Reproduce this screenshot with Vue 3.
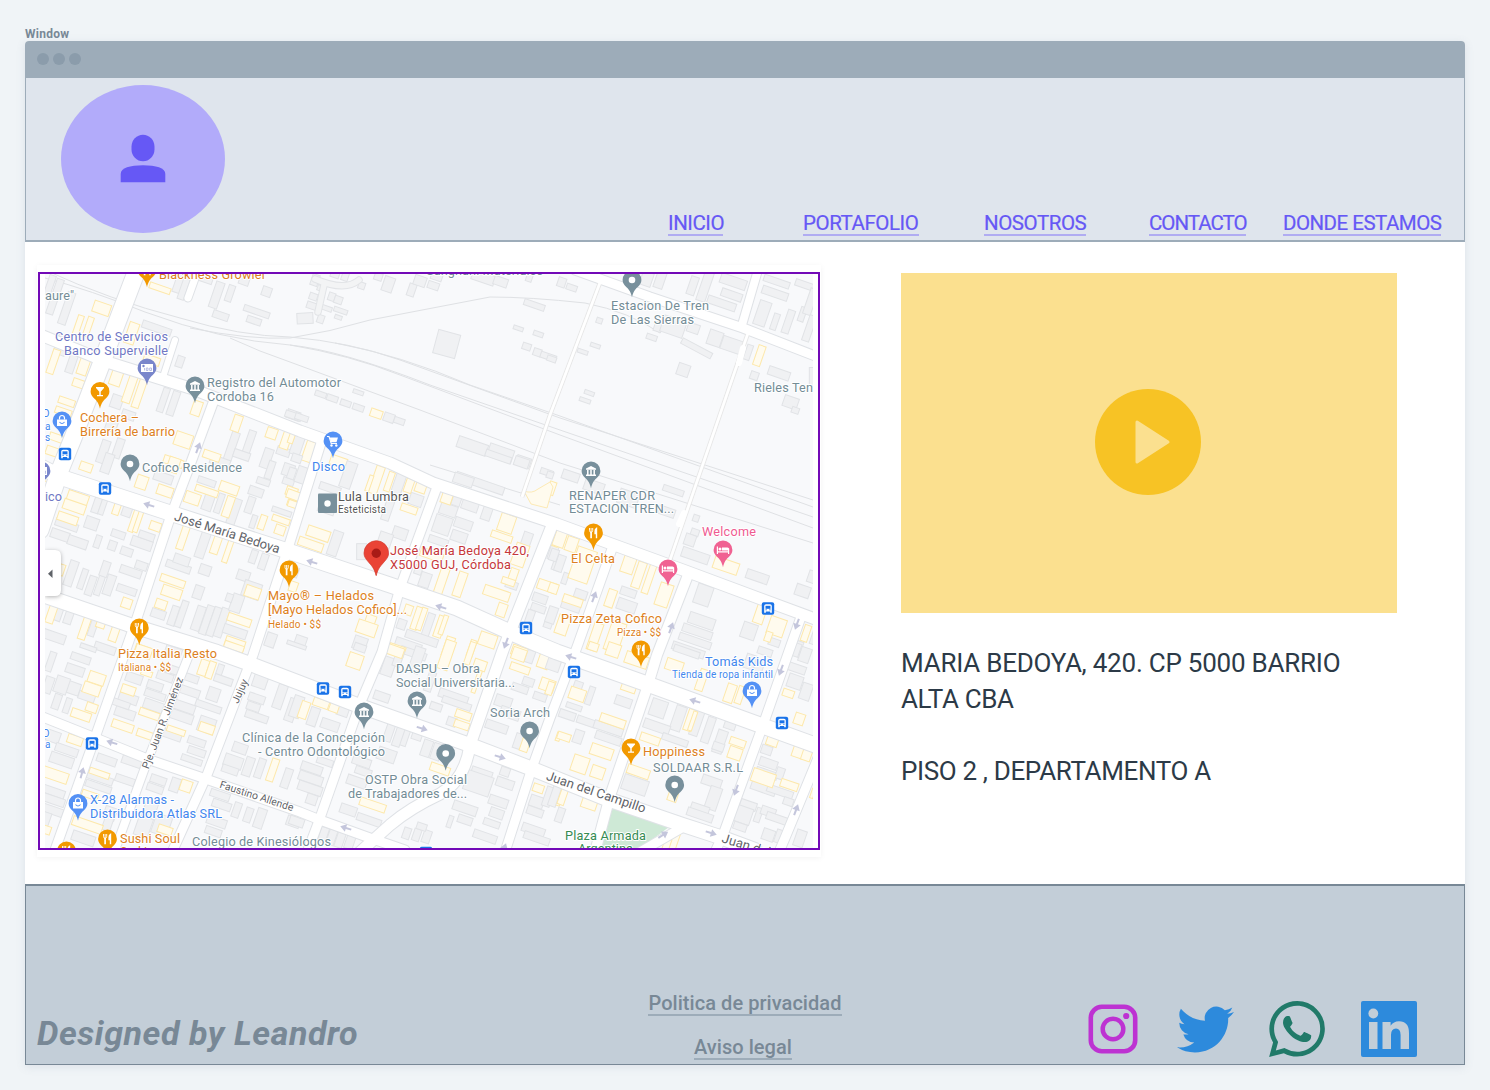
<script setup>
const nav = [
  { t: 'INICIO', w: 55, gap: 0, s: -.45 },
  { t: 'PORTAFOLIO', w: 116, gap: 80, s: -.45 },
  { t: 'NOSOTROS', w: 102, gap: 65, s: -.45 },
  { t: 'CONTACTO', w: 97, gap: 63, s: -1 },
  { t: 'DONDE ESTAMOS', w: 158, gap: 37, s: -.52 },
]

// Streets: width + path
const streets = [
  [9, 'M575 270L650 297L743 328L815 356'],
  [11, 'M43 336L107 362L190 388L300 431L390 463L433 483L557 524L617 546L683 570L815 619'],
  [15, 'M43 468L63 478L170 513L300 555L390 585L457 608L523 638L557 652L650 685L760 725L815 745'],
  [14, 'M43 595L57 600L130 625L217 652L253 665L300 683L357 705L470 745L530 768L607 799L683 825L720 837L755 850'],
  [9, 'M43 717L93 737L150 760L203 778L300 812L320 820L370 838L405 850'],
  [17, 'M137 270L102 362L73 438L60 470L40 530'],
  [7, 'M198 270L188 298'],
  [6, 'M175 340L163 377'],
  [9, 'M213 403L190 465L170 518L137 618L97 732L55 850'],
  [9, 'M321 443L290 542L253 655L207 775L173 850'],
  [8, 'M189 655L147 762L115 850'],
  [9, 'M437 487L400 588L382 652L360 704L320 818L308 850'],
  [11, 'M553 523L510 632L503 650L470 745Q465 780 440 794Q410 808 390 825L360 852'],
  [9, 'M613 546L577 647L550 718L532 768L505 852'],
  [10, 'M688 575L657 655L647 688L610 796L595 852'],
  [9, 'M801 617L790 648L763 725L723 835L715 852'],
  [8, 'M758 270L742 325'],
  [9, 'M818 758L785 838L779 852'],
  [9, 'M685 826L640 852'],
]
const paths = ['M601 280L550 415L522 497', 'M748 333L670 560']
const rails = [
  'M45 278Q90 290 145 312Q220 340 290 345Q340 350 430 385L560 430L813 517',
  'M45 270Q110 300 180 318Q240 336 290 337Q350 342 400 360L560 418L813 500',
  'M190 328Q250 340 290 338Q330 332 370 320L490 297Q530 297 585 303Q630 312 660 333',
  'M290 345Q350 355 400 375L560 435L813 528', 'M230 338Q260 352 290 362L420 410L560 463L813 543',
  'M335 343Q400 355 470 385L560 416L813 507', 'M430 465L560 505',
]

// Buildings per tile, in thirds of a pixel: centre x, centre y, width, depth
const tiles = [
  { x: 30, y: 265,
    g: [[75,95,22,110],[110,130,24,100],[60,60,20,60],[380,190,90,22],[450,50,28,70],[465,60,20,90],[520,35,60,30],[560,90,26,80],[600,85,20,50],[645,40,30,40],[710,80,28,28],[572,152,48,22],[680,140,80,18],[672,167,44,20],[95,240,35,60],[125,295,24,60],[450,290,22,34],[400,405,20,75],[430,415,22,75],[260,410,34,40],[295,450,40,26],[245,480,34,40],[220,560,26,70],[265,550,24,60],[605,545,24,90],[655,540,22,90],[635,570,50,24],[790,450,40,26],[570,590,60,26],[710,580,28,60],[760,560,40,24]],
    y2: [[215,130,52,34],[145,180,18,60],[175,185,18,60],[305,205,30,65],[390,70,65,18],[70,290,22,75],[160,305,30,50],[145,355,34,24],[258,340,34,44],[300,370,25,90],[328,385,22,90],[365,285,50,24],[110,410,50,20],[100,440,50,20],[85,520,55,22],[70,560,45,26],[500,430,28,44],[460,525,52,42],[620,475,26,50],[725,505,32,32],[768,525,26,55],[545,572,52,24],[430,590,60,24]] },
  { x: 290, y: 265,
    g: [[75,45,22,34],[70,95,24,20],[65,122,30,20],[92,70,20,16],[125,95,20,24],[110,130,32,14],[145,105,24,22],[152,137,42,14],[92,162,20,24],[145,157,22,12],[135,28,26,20],[165,35,20,24],[215,62,20,20],[265,35,24,22],[295,58,32,45],[365,75,22,38],[390,48,36,30],[430,62,34,22],[440,35,34,22],[580,38,70,30],[632,50,42,26],[718,38,18,24],[733,120,64,18],[685,190,30,12],[745,207,30,14],[710,245,26,20],[742,262,24,22],[775,275,48,18],[470,237,68,72,15],[92,388,34,16],[127,400,34,18],[167,415,32,18],[205,428,34,18],[205,382,32,12],[45,160,48,32,-3],[10,452,50,20],[35,458,40,18],[297,458,32,26],[328,468,32,18],[547,543,92,34],[632,565,76,40],[700,590,44,30],[22,540,32,60]],
    y2: [[259,446,36,24],[58,560,32,62],[145,590,50,30],[4,520,16,30]] },
  { x: 550, y: 265,
    g: [[35,52,24,28],[65,68,32,18],[290,42,34,42],[330,45,28,50],[428,62,24,56],[465,65,28,90],[550,50,80,30],[545,90,64,24],[515,115,88,24],[680,50,80,20],[675,85,80,24],[637,145,36,75],[675,170,18,50],[715,170,22,72],[757,148,18,44],[765,60,60,20],[782,110,24,80],[778,190,22,80],[148,167,18,16],[305,217,32,16],[136,242,30,12],[98,260,32,12],[5,282,28,16],[440,250,100,18,28],[325,185,24,30],[370,185,70,50],[430,190,36,28],[495,220,42,45],[545,240,62,40],[400,315,36,36],[595,262,18,46],[613,332,24,24],[687,325,66,26],[118,384,30,12],[105,406,34,12],[722,412,44,34],[736,436,22,18],[787,335,18,55,0]],
    y2: [[628,272,22,62]] },
  { x: 30, y: 455,
    g: [[232,25,28,60],[202,145,22,60],[292,165,28,40],[220,150,16,60],[185,205,40,36],[110,210,70,22],[90,240,56,28],[143,262,60,28],[203,260,18,38],[265,238,42,22],[247,272,24,28],[290,290,36,24],[335,265,64,30],[350,243,48,22],[123,355,26,78],[158,372,18,62],[182,392,22,60],[208,392,18,60],[225,342,24,46],[238,390,26,62],[302,350,66,24],[334,332,36,24],[290,405,60,22],[445,335,76,22],[455,315,48,28],[518,270,28,80],[525,345,34,30],[505,412,28,40],[430,482,22,60],[455,477,20,82],[385,477,44,26],[505,490,26,75],[530,495,22,90],[552,500,22,90],[575,503,24,90],[640,362,38,30],[665,405,54,48],[620,445,34,54],[598,428,20,24],[615,530,72,28],[670,305,20,40],[700,320,22,48],[535,140,30,54],[568,145,18,60],[612,170,26,80],[660,150,22,50],[678,110,44,26],[700,80,40,20],[755,170,60,16],[775,80,34,20],[775,45,34,36],[720,45,20,55],[670,200,16,40],[400,68,58,28],[530,80,55,20],[85,470,26,55],[118,480,24,55],[72,545,70,28],[190,515,20,60],[225,580,65,24],[722,555,30,42],[430,590,50,28]],
    y2: [[168,36,38,26],[55,70,28,22],[143,130,64,34],[133,155,68,30],[113,190,62,26],[262,155,20,50],[312,195,16,74],[325,198,14,70],[376,214,34,26],[335,82,34,40],[405,108,48,30],[487,130,46,34],[530,108,70,20],[597,100,58,30],[595,155,24,64],[460,245,22,80],[558,270,24,55],[593,290,16,68],[697,202,20,44],[785,110,34,26],[753,195,54,18],[750,225,30,28],[786,145,28,18],[428,378,76,22],[425,412,60,32],[393,448,34,28],[290,445,30,30],[668,412,46,34],[628,495,72,24],[615,565,60,28],[65,475,24,60],[165,515,22,80],[213,505,26,28],[253,535,24,50],[95,345,16,34],[430,30,34,45],[340,585,50,24],[790,395,24,30]] },
  { x: 290, y: 455,
    g: [[175,60,34,80],[35,60,32,50],[5,55,22,34],[120,100,65,22],[20,10,30,24],[325,90,30,70],[295,160,24,75],[378,135,40,34],[110,160,50,30],[330,235,44,34],[285,255,40,44],[135,265,30,76],[215,290,30,48,0],[475,165,52,34],[457,210,52,54],[445,258,60,22],[520,207,54,30],[507,245,48,32],[500,135,26,34],[540,152,50,30],[590,175,28,42],[570,85,150,24],[520,75,60,30],[695,22,44,28],[770,52,38,18],[625,5,80,20],[405,375,32,44],[385,345,22,26],[710,255,28,46],[665,390,36,22],[750,430,44,26],[745,460,44,22],[720,485,22,40],[780,490,24,60],[790,290,24,50],[800,330,24,34],[32,558,34,30],[210,565,40,40],[335,508,26,30],[415,510,22,72],[395,550,100,24],[355,570,80,26],[370,595,80,22],[10,350,30,30]],
    y2: [[260,75,26,85],[238,85,12,50],[298,80,18,60],[357,92,24,42],[392,98,32,30],[357,162,50,22],[85,236,70,32],[62,268,76,26],[10,120,40,26],[10,148,32,20],[470,130,32,32],[650,205,46,54],[635,245,65,20],[690,300,40,68],[670,360,24,40],[655,380,40,20],[425,300,70,26],[455,378,26,80],[510,388,26,76],[620,415,80,30],[635,465,28,40],[770,393,55,30],[800,250,20,50],[380,490,20,70],[395,492,16,70],[355,465,24,30],[450,515,24,66],[460,510,14,60],[240,500,30,40],[230,520,60,40],[593,555,52,40],[475,575,26,60],[545,580,18,50],[320,585,50,30],[690,590,50,30]] },
  { x: 550, y: 455,
    g: [[62,63,52,28],[132,95,60,34],[370,107,64,18],[235,130,60,44],[350,170,50,26],[438,190,18,20],[435,232,24,20],[420,255,32,34],[436,302,84,30],[622,365,68,28],[758,408,44,34],[785,365,22,36],[460,420,48,60],[235,412,48,24],[230,452,58,34],[92,418,38,26],[62,455,58,22],[30,325,24,50],[12,300,24,36],[45,370,16,34],[5,480,28,50],[455,498,80,34],[442,530,92,24],[435,558,100,22],[415,585,100,24],[597,528,44,48],[673,562,34,22],[645,590,44,22],[800,530,20,80],[745,575,24,34],[0,60,20,20]],
    y2: [[30,250,34,52],[65,268,34,44],[98,330,60,100],[235,330,38,50],[267,360,26,80],[297,372,20,90],[342,420,40,70],[182,430,26,54],[68,437,60,24],[10,400,28,30],[38,510,36,58],[135,545,28,84],[195,545,45,90],[528,332,76,36],[680,515,50,54],[630,478,30,56],[655,545,20,30],[768,535,20,50],[5,100,20,40],[260,590,30,30]] },
  { x: 30, y: 645,
    g: [[152,40,60,22],[135,75,56,28],[62,50,20,60],[130,130,40,36],[95,120,40,50],[55,120,26,50],[170,155,50,24],[80,170,22,46],[112,182,18,46],[175,8,50,14],[312,100,50,28],[295,160,58,28],[285,205,62,28],[270,175,60,20],[430,75,50,24],[405,95,50,24],[375,122,48,24],[375,150,64,22],[370,182,60,30],[485,100,42,22],[480,140,60,24],[550,148,36,40],[535,185,80,20],[570,75,18,34],[580,105,56,22],[460,185,72,28],[455,215,70,28],[425,270,60,24],[530,240,50,46],[500,290,54,22],[500,320,54,22],[485,345,64,18],[690,110,42,38],[750,155,28,74],[785,195,28,70],[680,160,50,24],[670,185,40,24],[680,215,70,22],[70,275,40,34],[110,315,70,24],[95,345,72,32],[230,345,60,24],[305,350,60,24],[210,400,80,22],[205,425,80,20],[285,405,60,22],[385,405,48,24],[375,430,50,22],[435,420,28,42],[70,440,70,24],[70,465,70,24],[65,495,70,24],[360,495,38,50],[340,545,44,60],[395,540,50,60],[240,505,36,38],[570,450,60,22],[575,480,58,24],[620,495,22,46],[655,510,22,44],[690,520,28,60],[560,530,60,26],[550,560,50,22],[610,350,56,36],[600,375,50,22],[655,365,26,58],[690,370,22,60],[770,400,24,60],[160,580,70,30],[235,530,26,55],[40,530,34,60],[630,310,44,30],[790,530,40,30]],
    y2: [[200,100,50,34],[185,132,52,34],[185,188,34,26],[153,210,60,26],[295,135,42,26],[520,68,26,48],[542,75,20,52],[358,207,62,22],[278,243,66,24],[345,268,50,22],[438,257,56,18],[530,250,46,28],[612,5,60,20],[340,20,50,34],[135,285,46,26],[75,390,80,32],[208,385,62,18],[468,423,34,34],[728,375,22,70],[172,540,92,28],[50,555,24,24],[180,450,50,20],[405,555,44,24],[805,200,12,40],[350,85,34,16]] },
  { x: 290, y: 645,
    g: [[20,185,30,66],[70,215,28,56],[158,200,34,26],[295,65,36,56],[325,40,24,50],[275,155,48,26],[120,240,55,30],[345,270,24,66],[298,260,24,60],[325,275,24,60],[380,275,30,20],[438,185,36,22],[420,110,22,60],[490,155,90,26],[500,175,90,20],[485,230,28,26],[410,310,28,50],[440,320,28,50],[380,45,32,80],[65,370,65,26],[62,400,74,28],[60,430,74,28],[65,463,32,30],[105,350,50,20],[215,350,56,26],[290,330,55,38],[220,380,50,22],[200,410,60,28],[175,495,50,28],[237,525,75,22],[350,565,22,34],[380,570,22,36],[410,575,24,38],[395,545,30,20],[575,385,64,26],[565,415,80,60],[525,490,74,28],[525,525,44,24],[480,530,14,36],[645,380,28,26],[645,415,54,28],[625,470,58,28],[620,505,42,28],[605,535,50,20],[585,575,72,24],[690,290,34,46],[620,245,68,26],[640,170,50,34],[660,205,60,30],[715,110,34,24],[690,130,50,22],[720,35,24,38],[750,155,40,22],[740,470,42,34],[735,500,50,24],[775,455,24,60],[730,555,70,26],[740,580,80,22],[100,570,24,46],[125,577,24,46],[150,585,24,46],[180,590,26,44],[20,530,44,26],[795,55,30,34],[210,8,36,22],[20,0,60,12]],
    y2: [[195,48,44,44],[315,18,52,30],[42,195,26,52],[93,175,48,24],[132,188,28,26],[470,30,32,90],[540,25,18,70],[570,60,38,30],[450,372,60,24],[248,480,80,24],[520,210,48,24],[515,240,46,22],[687,28,42,36],[690,70,60,22],[762,47,34,46],[772,120,44,36],[705,300,24,40],[745,430,32,24],[560,110,12,70],[805,275,12,26],[805,470,14,24]] },
  { x: 550, y: 645,
    g: [[10,60,40,34],[120,152,18,56],[85,120,26,22],[220,170,50,28],[72,185,48,16],[52,210,50,24],[110,230,60,22],[175,250,90,24],[175,280,80,24],[85,275,28,40],[325,190,48,52],[385,220,32,76],[440,235,26,76],[475,255,24,80],[320,245,80,28],[375,285,80,20],[255,420,76,46],[410,20,80,20],[510,290,30,70],[540,240,34,26],[505,305,34,24],[485,410,60,28],[490,460,36,70],[450,490,56,22],[450,510,80,24],[650,315,32,26],[655,355,55,26],[650,385,66,22],[640,430,76,26],[690,440,80,22],[595,480,50,24],[580,510,50,50],[570,545,40,22],[625,510,18,44],[655,500,44,26],[680,520,64,22],[715,470,30,22],[655,570,36,34],[750,580,30,50],[690,575,28,40],[740,70,56,24],[735,110,44,40],[765,30,32,44],[768,140,32,50],[740,15,20,40],[690,385,24,34],[15,450,24,70],[30,510,22,44],[625,70,26,44],[600,50,30,44]],
    y2: [[82,148,48,36],[235,130,44,20],[188,228,78,26],[155,320,68,34],[300,282,60,24],[265,380,68,28],[42,275,40,22],[90,358,48,50],[143,382,40,36],[40,450,20,60],[118,475,46,34],[373,62,52,34],[455,105,24,66],[540,145,28,56],[420,225,24,66],[428,228,12,60],[563,292,48,22],[555,325,40,36],[667,288,34,30],[745,320,34,36],[770,330,28,34],[640,398,70,40],[718,420,54,24],[368,455,28,28],[368,590,30,60],[350,600,20,40],[715,145,34,22],[748,222,30,34],[190,15,40,40],[260,45,70,36],[130,5,30,24],[570,150,20,54],[788,445,10,30],[0,130,20,40]] },
]

const C = { o: '#dd7f22', g: '#738c96', p: '#7077c4', b: '#4387ee', k: '#ef5a91', r: '#c5373b', n: '#358b52', d: '#555' }
// text, left, right, baseline, colour, size
const labels = [
  ['Blackness Growler', 159, 266, 279, 'o'], ['Sanghani Materiales', 426, 543, 275, 'g'], ['aure"', 45, 74, 299.5, 'g'],
  ['Centro de Servicios', 55, 168, 341, 'p'], ['Banco Supervielle', 64, 168, 355, 'p'],
  ['Registro del Automotor', 207, 341, 387, 'g'], ['Cordoba 16', 207, 274, 401, 'g'],
  ['Cochera –', 80, 139, 421.5, 'o'], ['Birrería de barrio', 80, 175, 435.5, 'o'],
  ['Estacion De Tren', 611, 709, 310, 'g'], ['De Las Sierras', 611, 694, 324, 'g'], ['Rieles Ten', 754, 813, 392, 'g'],
  ['Disco', 312, 345, 471, 'b'], ['Cofico Residence', 142, 242, 472, 'g'],
  ['Lula Lumbra', 338, 409, 501, 'd'], ['Esteticista', 338, 386, 513, 'd', 10],
  ['José María Bedoya 420,', 390, 529, 555, 'r'], ['X5000 GUJ, Córdoba', 390, 511, 569, 'r'],
  ['RENAPER CDR', 569, 655, 500, 'g'], ['ESTACION TREN...', 569, 674, 513, 'g'],
  ['Welcome', 702, 756, 536, 'k'], ['El Celta', 571, 615, 563, 'o'],
  ['Mayo® – Helados', 268, 374, 600, 'o'], ['[Mayo Helados Cofico]...', 268, 407, 614, 'o'], ['Helado • $$', 268, 321, 627.5, 'o', 10],
  ['Pizza Zeta Cofico', 561, 662, 623, 'o'], ['Pizza • $$', 617, 661, 636, 'o', 10],
  ['Tomás Kids', 705, 773, 665.5, 'b'], ['Tienda de ropa infantil', 672, 773, 678, 'b', 10],
  ['Pizza Italia Resto', 118, 217, 658, 'o'], ['Italiana • $$', 118, 171, 671, 'o', 10],
  ['DASPU – Obra', 396, 480, 673, 'g'], ['Social Universitaria...', 396, 515, 687, 'g'], ['Soria Arch', 490, 550, 717, 'g'],
  ['Clínica de la Concepción', 242, 385, 742, 'g'], ['- Centro Odontológico', 258, 385, 756, 'g'],
  ['OSTP Obra Social', 365, 467, 784, 'g'], ['de Trabajadores de...', 348, 467, 798, 'g'],
  ['Hoppiness', 643, 705, 756, 'o'], ['SOLDAAR S.R.L', 653, 743, 772, 'g'],
  ['X-28 Alarmas -', 90, 174, 804, 'b'], ['Distribuidora Atlas SRL', 90, 222, 818, 'b'],
  ['Sushi Soul', 120, 180, 842.5, 'o'], ['Sushi', 120, 147, 856, 'o'], ['Colegio de Kinesiólogos', 192, 331, 846, 'g'],
  ['Plaza Armada', 565, 646, 839.5, 'n'], ['Argentina', 578, 633, 853, 'n'],
  ['O', 42, 50, 417, 'b', 11], ['a', 45, 50, 429.5, 'b', 10], ['s', 45, 50, 440.5, 'b', 10], ['ico', 45, 62, 501, 'p'],
  ['O', 42, 50, 736.5, 'b', 11], ['a', 45, 50, 748, 'b', 10],
]
// text, start x, baseline y, angle, length, size
const roads = [
  ['José María Bedoya', 173.5, 520, 17.7, 110, 13], ['Juan del Campillo', 545.5, 779.5, 18.8, 104, 13], ['Juan del', 721, 842, 17, 50, 13],
  ['Jujuy', 238, 704, -66, 25, 10.5], ['Pje. Juan R. Jiménez', 148.5, 769.5, -69, 97, 10.5], ['Faustino Allende', 219, 787.5, 18, 77, 10.5],
]
const pinColor = { food: '#f29900', bar: '#f29900', bank: '#78909c', dot: '#78909c', bag: '#5491f5', cart: '#5491f5', bed: '#f06292', atm: '#7986cb' }
const pins = [
  ['food', 147, 270], ['atm', 147, 368], ['bank', 195, 386], ['bar', 100, 391.5], ['bag', 62, 421], ['dot', 130, 464], ['dot', 632, 280],
  ['cart', 333, 441], ['bank', 591, 471], ['food', 593.5, 533], ['bed', 723, 550], ['bed', 668, 569], ['food', 641, 650], ['bag', 752, 691],
  ['food', 289, 570], ['food', 139.3, 628], ['bank', 364, 712], ['bank', 417, 701], ['dot', 445.7, 753.5], ['dot', 529.6, 731], ['bar', 631, 748],
  ['dot', 674.7, 785], ['bag', 78, 803.5], ['food', 107.5, 839], ['food', 66.5, 851], ['atm', 41, 471],
]
const buses = [[65, 454], [105, 488.5], [526, 628], [768, 608.5], [574, 672], [782, 723], [323, 688.5], [345, 692], [92, 743.5], [426, 853]]
const arrows = [
  [149, 505, 197], [198, 448, -70], [312, 562, 197], [441, 607, 197], [506, 643, 110], [594, 597, -70], [671, 628, -70], [797, 624, 110],
  [571, 657, 197], [695, 701, 197], [781, 670, 110], [736, 790, 110], [796, 810, -70], [663, 835, -32], [711, 833, 17], [422, 728.5, 17],
  [500, 757, 17], [346, 828, 197], [112, 742.5, 197], [82, 773, -75], [504, 849, -70],
]
</script>

<template>
  <div class="page">
    <div class="caption">Window</div>
    <div class="window">
      <div class="bar"><i></i><i></i><i></i></div>
      <header>
        <div class="avatar">
          <svg viewBox="0 0 46 50" width="46" height="50">
            <rect x="11.500" y=".8" width="23" height="26.500" rx="11.500" ry="12" />
            <path d="M.7 48.300V40C.7 34 10 31.300 23 31.300S45.300 34 45.300 40V48.300Z" />
          </svg>
        </div>
        <nav>
          <a v-for="n in nav" :key="n.t" :style="{ width: n.w + 'px', marginLeft: n.gap + 'px', letterSpacing: n.s + 'px' }">{{ n.t }}</a>
        </nav>
      </header>

      <main>
        <div class="card">
          <div class="frame">
            <svg class="map" viewBox="45 274 768 574" width="768" height="574">
              <rect x="45" y="274" width="768" height="574" fill="#f8f9fb" />
              <g fill="none" stroke="#dfe1e4" stroke-width="1">
                <path v-for="r in rails" :key="r" :d="r" />
              </g>
              <g v-for="(t, i) in tiles" :key="i" :transform="`translate(${t.x} ${t.y}) scale(.33333)`" stroke-width="3">
                <rect v-for="(b, j) in t.g" :key="'g' + j" :x="-b[2] / 2" :y="-b[3] / 2" :width="b[2]" :height="b[3]" fill="#f0f1f3" stroke="#e1e3e6" :transform="`translate(${b[0]} ${b[1]}) rotate(${b[4] ?? 19})`" />
                <rect v-for="(b, j) in t.y2" :key="'y' + j" :x="-b[2] / 2" :y="-b[3] / 2" :width="b[2]" :height="b[3]" fill="#fffbee" stroke="#fde8ab" :transform="`translate(${b[0]} ${b[1]}) rotate(19)`" />
              </g>
              <path d="M524 491Q532 494 538 489L550 482L553 487L547 508L531 504Z" fill="#fffbee" stroke="#fdeab5" />
              <path d="M610 804L669 827L638 850H596Z" fill="#cee9d6" />
              <g fill="none" stroke="#dfe2e6" stroke-linejoin="round" stroke-linecap="round">
                <path v-for="s in streets" :key="s[1]" :d="s[1]" :stroke-width="s[0] + 2" />
              </g>
              <path v-for="p in paths" :key="p" :d="p" fill="none" stroke="#e6e6e6" stroke-width="4.500" />
              <path v-for="p in paths" :key="'w' + p" :d="p" fill="none" stroke="#fff" stroke-width="2.800" />
              <path d="M743 348L739 363M684 513L679 524" stroke="#fff" stroke-width="6" stroke-linecap="round" />
              <path d="M315 279Q345 292 359 280M324 285L318 312" fill="none" stroke="#e2e4e7" stroke-width="7.500" stroke-linecap="round" />
              <path d="M315 279Q345 292 359 280M324 285L318 312" fill="none" stroke="#f3f4f5" stroke-width="5.500" stroke-linecap="round" />
              <g fill="none" stroke="#fff" stroke-linejoin="round" stroke-linecap="round">
                <path v-for="s in streets" :key="s[1]" :d="s[1]" :stroke-width="s[0]" />
              </g>
              <g fill="none" stroke="#c4c6dc" stroke-width="2">
                <path v-for="(a, i) in arrows" :key="i" d="M-5.500 0H1" :transform="`translate(${a[0]} ${a[1]}) rotate(${a[2]})`" />
              </g>
              <g fill="#c4c6dc">
                <path v-for="(a, i) in arrows" :key="i" d="M0-4L6 0L0 4Z" :transform="`translate(${a[0]} ${a[1]}) rotate(${a[2]})`" />
              </g>

              <g v-for="(b, i) in buses" :key="'b' + i" :transform="`translate(${b[0]} ${b[1]})`">
                <rect x="-6.200" y="-6.200" width="12.400" height="12.400" rx="2" fill="#1a73e8" />
                <path d="M-3.800 4.200V-2.500Q-3.800-4.200-2-4.200H2Q3.800-4.200 3.800-2.500V4.200H2.200V3H-2.200V4.200Z" fill="#fff" />
                <path d="M-2.500-2.700H2.500V.3H-2.500Z" fill="#1a73e8" />
                <path d="M-2.500 1.300H-1.300M1.300 1.300H2.500" stroke="#1a73e8" />
              </g>

              <rect x="318" y="493.500" width="19" height="19.500" rx="1" fill="#78909c" />
              <circle cx="327.500" cy="503.500" r="3.200" fill="#fff" />

              <g v-for="(p, i) in pins" :key="'p' + i" :transform="`translate(${p[1]} ${p[2]})`" fill="#fff">
                <path d="M0 17.200C-1.300 12-3 9.600-5.500 7.300C-8 5-9.400 2.800-9.400 0A9.400 9.400 0 0 1 9.400 0C9.400 2.800 8 5 5.500 7.300C3 9.600 1.300 12 0 17.200Z" :fill="pinColor[p[0]]" />
                <circle v-if="p[0] === 'dot'" r="3.300" />
                <g v-else-if="p[0] === 'food'" stroke="#fff" fill="none">
                  <path d="M-4-5V-2.500Q-4-.8-2.400-.8T-.8-2.500V-5M-2.400-5V0" stroke-width=".9" />
                  <path d="M-2.400-1V5.300" stroke-width="1.700" />
                  <path d="M3 5.300V-4.600Q1.600-3.800 1.600-1.500V.5H3" stroke-width="1.400" fill="#fff" />
                </g>
                <path v-else-if="p[0] === 'bar'" d="M-4-4.500H4V-3.500L.7.200V3.500H3V4.700H-3V3.500H-.7V.200L-4-3.500Z" />
                <g v-else-if="p[0] === 'bank'">
                  <path d="M-5-2.500L0-5L5-2.500V-1.300H-5ZM-5 3.500H5V5H-5Z" />
                  <path d="M-3.200-1.300V4M0-1.300V4M3.200-1.300V4" stroke="#fff" stroke-width="1.500" />
                </g>
                <g v-else-if="p[0] === 'bag'">
                  <path d="M-5-1.500H5V5H-5Z" />
                  <path d="M-2.500-1.500V-3A2.500 2.500 0 0 1 2.500-3V-1.500" fill="none" stroke="#fff" stroke-width="1.200" />
                  <path d="M-2.500 1Q0 4 2.500 1" fill="none" stroke="#5491f5" stroke-width="1.100" />
                </g>
                <g v-else-if="p[0] === 'cart'">
                  <path d="M-3.500-3.500H5L3.500 1.300H-2Z" />
                  <path d="M-6-4.500H-4L-1.800 2.500H4" fill="none" stroke="#fff" stroke-width="1.100" />
                  <circle cx="-1.500" cy="4.500" r="1.200" /><circle cx="3.300" cy="4.500" r="1.200" />
                </g>
                <g v-else-if="p[0] === 'bed'">
                  <path d="M-6.200-3.500H-5V1.200H5V-1.500H6.200V4H5V2.600H-5V4H-6.200ZM-1-2.500H4.500Q6.200-2.300 6.200-.5V.5H-1Z" />
                  <circle cx="-3" cy="-1" r="1.500" />
                </g>
                <g v-else>
                  <rect x="-6" y="-4" width="12" height="8" />
                  <circle cx="-3.500" cy="-2" r="1.200" fill="#7986cb" />
                  <path d="M-2.500 0V2.500M-.7 0H1V2.500H-.7ZM2.700 0H4.500V2.500H2.700Z" fill="none" stroke="#a7afdd" stroke-width=".8" />
                </g>
              </g>

              <path d="M376 575.500C374.500 568.500 371.500 565.500 368 561.500C365 558 364 556 364 553A12.300 12.300 0 0 1 388.600 553C388.600 556 387.500 558 384.500 561.500C381 565.500 377.700 568.500 376.300 575.500Z" fill="#ea4335" stroke="#d33a2d" stroke-width=".7" />
              <circle cx="376.300" cy="553.300" r="4.700" fill="#a91b16" />

              <g font-family="Roboto, sans-serif" stroke="#fff" stroke-width="2" stroke-linejoin="round" paint-order="stroke">
                <text v-for="(l, i) in labels" :key="i" :x="l[1]" :y="l[3]" :textLength="l[2] - l[1]" :font-size="l[5] || 12.7" :fill="C[l[4]]">{{ l[0] }}</text>
                <text v-for="(r, i) in roads" :key="'r' + i" :textLength="r[4]" :font-size="r[5]" fill="#5f6368" :transform="`translate(${r[1]} ${r[2]}) rotate(${r[3]})`">{{ r[0] }}</text>
              </g>

              <path d="M45 550H55Q61 550 61 556V590Q61 596 55 596H45Z" fill="#fff" class="tab" />
              <path d="M52.500 569.500V578L48 573.700Z" fill="#5f6368" />
            </svg>
          </div>
        </div>

        <section>
          <div class="video">
            <svg viewBox="0 0 106 106" width="106" height="106">
              <circle cx="53" cy="53" r="53" fill="#f7c325" />
              <path d="M42 33V73L73 53Z" fill="#fbe08f" stroke="#fbe08f" stroke-width="3" stroke-linejoin="round" />
            </svg>
          </div>
          <p><span>MARIA BEDOYA, 420. CP 5000 BARRIO</span><br><span class="tight">ALTA CBA</span><br><br><span class="tight">PISO 2 , DEPARTAMENTO A</span></p>
        </section>
      </main>

      <footer>
        <div class="credit">Designed by Leandro</div>
        <div class="legal"><a>Politica de privacidad</a><a class="notice">Aviso legal</a></div>
        <div class="social">
          <svg class="ig" viewBox="0 0 50 50" width="50" height="50" fill="none" stroke="#bd32d2">
            <rect x="2.800" y="2.800" width="44.400" height="44.400" rx="11" stroke-width="4.600" />
            <circle cx="25" cy="25" r="10.300" stroke-width="4.500" /><circle cx="38.200" cy="12" r="3.100" fill="#bd32d2" stroke="none" />
          </svg>
          <svg class="tw" viewBox="0 2 24 20" width="57" height="47" preserveAspectRatio="none"><path fill="#2d8adc" d="M23.953 4.570a10 10 0 01-2.825.775 4.958 4.958 0 002.163-2.723c-.951.555-2.005.959-3.127 1.184a4.920 4.920 0 00-8.384 4.482C7.690 8.095 4.067 6.130 1.640 3.162a4.822 4.822 0 00-.666 2.475c0 1.710.870 3.213 2.188 4.096a4.904 4.904 0 01-2.228-.616v.060a4.923 4.923 0 003.946 4.827 4.996 4.996 0 01-2.212.085 4.936 4.936 0 004.604 3.417 9.867 9.867 0 01-6.102 2.105c-.390 0-.779-.023-1.170-.067a13.995 13.995 0 007.557 2.209c9.053 0 13.998-7.496 13.998-13.985 0-.210 0-.420-.015-.630A9.935 9.935 0 0024 4.590z" /></svg>
          <svg class="wa" viewBox="0 0 24 24" width="56" height="56"><path fill="#217a69" d="M17.472 14.382c-.297-.149-1.758-.867-2.030-.967-.273-.099-.471-.148-.670.150-.197.297-.767.966-.940 1.164-.173.199-.347.223-.644.075-.297-.150-1.255-.463-2.390-1.475-.883-.788-1.480-1.761-1.653-2.059-.173-.297-.018-.458.130-.606.134-.133.298-.347.446-.520.149-.174.198-.298.298-.497.099-.198.050-.371-.025-.520-.075-.149-.669-1.612-.916-2.207-.242-.579-.487-.500-.669-.510-.173-.008-.371-.010-.570-.010-.198 0-.520.074-.792.372-.272.297-1.040 1.016-1.040 2.479 0 1.462 1.065 2.875 1.213 3.074.149.198 2.096 3.200 5.077 4.487.709.306 1.262.489 1.694.625.712.227 1.360.195 1.871.118.571-.085 1.758-.719 2.006-1.413.248-.694.248-1.289.173-1.413-.074-.124-.272-.198-.570-.347m-5.421 7.403h-.004a9.870 9.870 0 01-5.031-1.378l-.361-.214-3.741.982.998-3.648-.235-.374a9.860 9.860 0 01-1.510-5.260c.001-5.450 4.436-9.884 9.888-9.884 2.640 0 5.122 1.030 6.988 2.898a9.825 9.825 0 012.893 6.994c-.003 5.450-4.437 9.884-9.885 9.884m8.413-18.297A11.815 11.815 0 0012.050 0C5.495 0 .160 5.335.157 11.892c0 2.096.547 4.142 1.588 5.945L.057 24l6.305-1.654a11.882 11.882 0 005.683 1.448h.005c6.554 0 11.890-5.335 11.893-11.893a11.821 11.821 0 00-3.480-8.413z" /></svg>
          <svg class="li" viewBox="0 0 56 56" width="56" height="56">
            <rect width="56" height="56" rx="2" fill="#2d8adc" />
            <g fill="#c3ced8"><circle cx="12.300" cy="12.500" r="4.900" /><path d="M8 21H16.500V48H8ZM21.500 21H29.600V24.700Q32.500 20.200 38 20.200Q48 20.200 48 32V48H39.600V34Q39.600 27.500 35 27.500Q30 27.500 30 34V48H21.500Z" /></g>
          </svg>
        </div>
      </footer>
    </div>
  </div>
</template>

<style>
body { margin: 0; background: #f0f4f7; }
</style>
<style scoped>
* { box-sizing: border-box; }
.page { width: 1490px; height: 1090px; padding: 27px 25px 0; overflow: hidden; background: #f0f4f7; font-family: Roboto, sans-serif; }
.caption { height: 14px; font-size: 12px; line-height: 14px; font-weight: 700; color: #788896; letter-spacing: .25px; }
.window { width: 1440px; height: 1024px; border-radius: 4px 4px 0 0; background: #fff; display: flex; flex-direction: column; box-shadow: 0 2px 10px rgba(90, 110, 140, .13); }
.bar { height: 37px; background: #9dacb9; border-radius: 4px 4px 0 0; display: flex; gap: 4px; padding: 12px; }
.bar i { width: 12px; height: 12px; border-radius: 50%; background: #8b9cab; }
header { height: 164px; background: #dfe5ed; border: solid #9dacb9; border-width: 0 1px 2px; display: flex; justify-content: space-between; align-items: flex-end; padding: 0 24px 4px 35px; }
.avatar { width: 164px; height: 148px; margin-bottom: 3px; border-radius: 50%; background: #b2abfa; display: flex; align-items: center; justify-content: center; }
.avatar svg { fill: #6658f5; margin-right: 1px; }
nav { display: flex; font-size: 20.5px; line-height: 26px; color: #6658f5; -webkit-text-stroke: .2px #6658f5; margin-right: -1px; }
nav a { height: 26px; border-bottom: 2px solid #b0acf2; white-space: nowrap; }
main { height: 642px; display: flex; }
.card { width: 784px; height: 592px; margin: 23px 0 0 12px; padding: 7px 1px; box-shadow: 0 1px 6px rgba(0, 0, 0, .05); }
.frame { width: 782px; height: 578px; border: 2px solid #7209b7; padding-left: 5px; }
.map { display: block; }
.tab { filter: drop-shadow(0 1px 2px rgba(0, 0, 0, .3)); }
section { margin: 31px 0 0 80px; width: 496px; }
.video { height: 340px; background: #fbe08f; display: flex; align-items: center; justify-content: center; }
.video svg { margin: 0 2px 2px 0; }
p { margin: 32px 0 0; font-size: 26px; line-height: 36px; color: #2c3a47; white-space: nowrap; letter-spacing: -.23px; }
.tight { letter-spacing: -.35px; }
footer { height: 181px; background: #c3ced8; border: 1px solid #788896; border-top-width: 2px; display: flex; color: #788896; align-items: flex-end; }
.credit { width: 520px; margin: 0 0 10px 11px; font-size: 34px; line-height: 42px; font-weight: 700; font-style: italic; letter-spacing: .55px; white-space: nowrap; }
.legal { width: 376px; display: flex; flex-direction: column; align-items: center; padding-bottom: 4px; gap: 18px; font-size: 20px; line-height: 26px; font-weight: 500; }
.legal a { height: 26px; border-bottom: 2px solid #9dacb9; white-space: nowrap; letter-spacing: .05px; }
.legal .notice { margin-right: 4px; }
.social { display: flex; align-items: center; height: 56px; margin: 0 0 7px 155px; }
.tw { margin-left: 39px; }
.wa { margin-left: 35px; }
.li { margin-left: 36px; }
</style>
